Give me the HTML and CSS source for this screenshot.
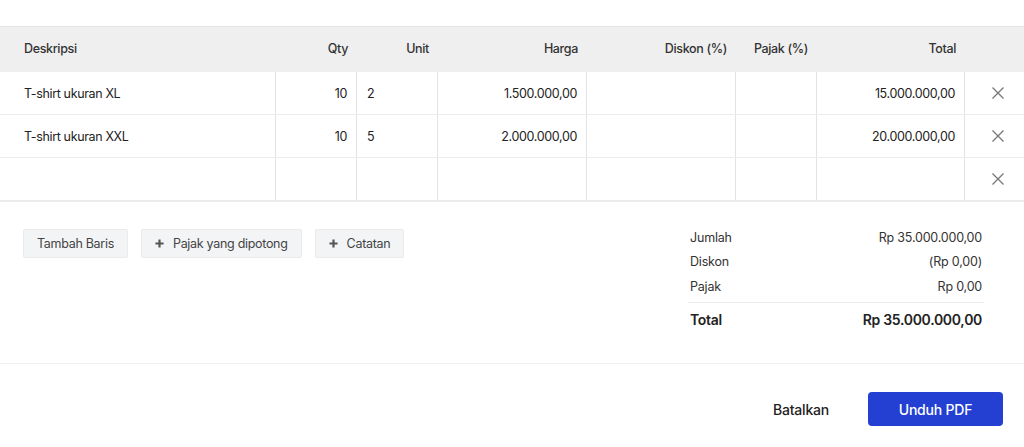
FILE: index.html
```html
<!DOCTYPE html>
<html lang="id">
<head>
<meta charset="utf-8">
<title>Faktur</title>
<link rel="stylesheet" href="styles.css">
</head>
<body>
<div class="sheet">
  <div class="grid head">
    <div class="c left">Deskripsi</div>
    <div class="c">Qty</div>
    <div class="c">Unit</div>
    <div class="c">Harga</div>
    <div class="c">Diskon (%)</div>
    <div class="c">Pajak (%)</div>
    <div class="c">Total</div>
    <div class="c"></div>
  </div>
  <div class="grid row">
    <div class="c left">T-shirt ukuran XL</div>
    <div class="c v">10</div>
    <div class="c v unit">2</div>
    <div class="c v">1.500.000,00</div>
    <div class="c v"></div>
    <div class="c v"></div>
    <div class="c v">15.000.000,00</div>
    <div class="c v x"><svg viewBox="0 0 14 14" width="14" height="14"><path d="M1.5 1.5 12.5 12.5M12.5 1.5 1.5 12.5"/></svg></div>
  </div>
  <div class="grid row">
    <div class="c left">T-shirt ukuran XXL</div>
    <div class="c v">10</div>
    <div class="c v unit">5</div>
    <div class="c v">2.000.000,00</div>
    <div class="c v"></div>
    <div class="c v"></div>
    <div class="c v">20.000.000,00</div>
    <div class="c v x"><svg viewBox="0 0 14 14" width="14" height="14"><path d="M1.5 1.5 12.5 12.5M12.5 1.5 1.5 12.5"/></svg></div>
  </div>
  <div class="grid row last">
    <div class="c left"></div>
    <div class="c v"></div>
    <div class="c v"></div>
    <div class="c v"></div>
    <div class="c v"></div>
    <div class="c v"></div>
    <div class="c v"></div>
    <div class="c v x"><svg viewBox="0 0 14 14" width="14" height="14"><path d="M1.5 1.5 12.5 12.5M12.5 1.5 1.5 12.5"/></svg></div>
  </div>

  <div class="middle">
    <div class="actions">
      <button class="btn">Tambah Baris</button>
      <button class="btn"><span class="plus"><svg viewBox="0 0 10 10" width="9" height="9"><path d="M5 0.5V9.5M0.5 5H9.5"/></svg></span>Pajak yang dipotong</button>
      <button class="btn"><span class="plus"><svg viewBox="0 0 10 10" width="9" height="9"><path d="M5 0.5V9.5M0.5 5H9.5"/></svg></span>Catatan</button>
    </div>
    <div class="summary">
      <div class="srow"><span>Jumlah</span><span>Rp 35.000.000,00</span></div>
      <div class="srow"><span>Diskon</span><span>(Rp 0,00)</span></div>
      <div class="srow"><span>Pajak</span><span>Rp 0,00</span></div>
      <div class="srow total"><span>Total</span><span>Rp 35.000.000,00</span></div>
    </div>
  </div>

  <div class="footer">
    <button class="cancel">Batalkan</button>
    <button class="primary">Unduh PDF</button>
  </div>
</div>
</body>
</html>
```

FILE: styles.css
```css
* { box-sizing: border-box; }
html, body { margin: 0; background: #fff; }
body {
  font-family: Inter, "Noto Sans", "Liberation Sans", sans-serif;
  color: #222;
  font-size: 12.5px;
  letter-spacing: -0.35px;
}
.sheet { padding-top: 26px; }

.grid {
  display: grid;
  grid-template-columns: 275px 81px 81px 149px 149px 81px 148px 60px;
}
.head {
  background: #efefef;
  border-top: 1px solid #e4e4e4;
  height: 46px;
  font-weight: 500;
  color: #333;
}
.c {
  display: flex;
  align-items: center;
  justify-content: flex-end;
  padding: 0 8px 0 10px;
}
.c.left { justify-content: flex-start; padding-left: 24px; }
.head .c { padding-bottom: 2px; }

.row {
  height: 43px;
  border-bottom: 1px solid #ececec;
}
.row.last { height: 44px; border-bottom: 2px solid #ececec; }
.row .c.v { border-left: 1px solid #e3e3e3; }
.row .c.v:not(.x) { padding-right: 9px; }
.row .c.unit { justify-content: flex-start; }
.row .c.x { justify-content: center; padding: 0 0 0 6px; }
.x svg { fill: none; stroke: #777; stroke-width: 1.3; }

.middle {
  display: flex;
  justify-content: space-between;
  padding: 27px 40px 0 23px;
  height: 162px;
  border-bottom: 1px solid #f0f0f0;
}
.actions { display: flex; gap: 13px; align-items: flex-start; }
.btn {
  font: inherit;
  font-size: 12.5px;
  letter-spacing: -0.3px;
  color: #444;
  background: #f3f4f6;
  border: 1px solid #eaebed;
  border-radius: 2px;
  height: 29px;
  padding: 0 13px;
  display: flex;
  align-items: center;
}
.plus { display: flex; margin-right: 9px; }
.plus svg { fill: none; stroke: #555; stroke-width: 2.4; }

.summary { width: 296px; margin-top: -4px; }
.srow {
  display: flex;
  justify-content: space-between;
  height: 24.5px;
  align-items: center;
  padding: 0 2px;
  color: #333;
  font-size: 12.5px;
  letter-spacing: -0.2px;
}
.srow.total {
  margin-top: 3px;
  border-top: 1px solid #ececec;
  height: 33px;
  padding-top: 1px;
  font-size: 14px;
  font-weight: 600;
  letter-spacing: -0.3px;
  color: #222;
}

.footer {
  display: flex;
  justify-content: flex-end;
  align-items: center;
  padding: 28px 21px 0 0;
  gap: 21px;
}
.cancel {
  font: inherit;
  font-size: 14px;
  font-weight: 500;
  letter-spacing: -0.2px;
  color: #222;
  background: none;
  border: none;
  padding: 0 18px;
  height: 34px;
}
.primary {
  font: inherit;
  font-size: 14px;
  font-weight: 500;
  letter-spacing: -0.2px;
  color: #fff;
  background: #2340d3;
  border: none;
  border-radius: 4px;
  width: 135px;
  height: 34px;
}
```
